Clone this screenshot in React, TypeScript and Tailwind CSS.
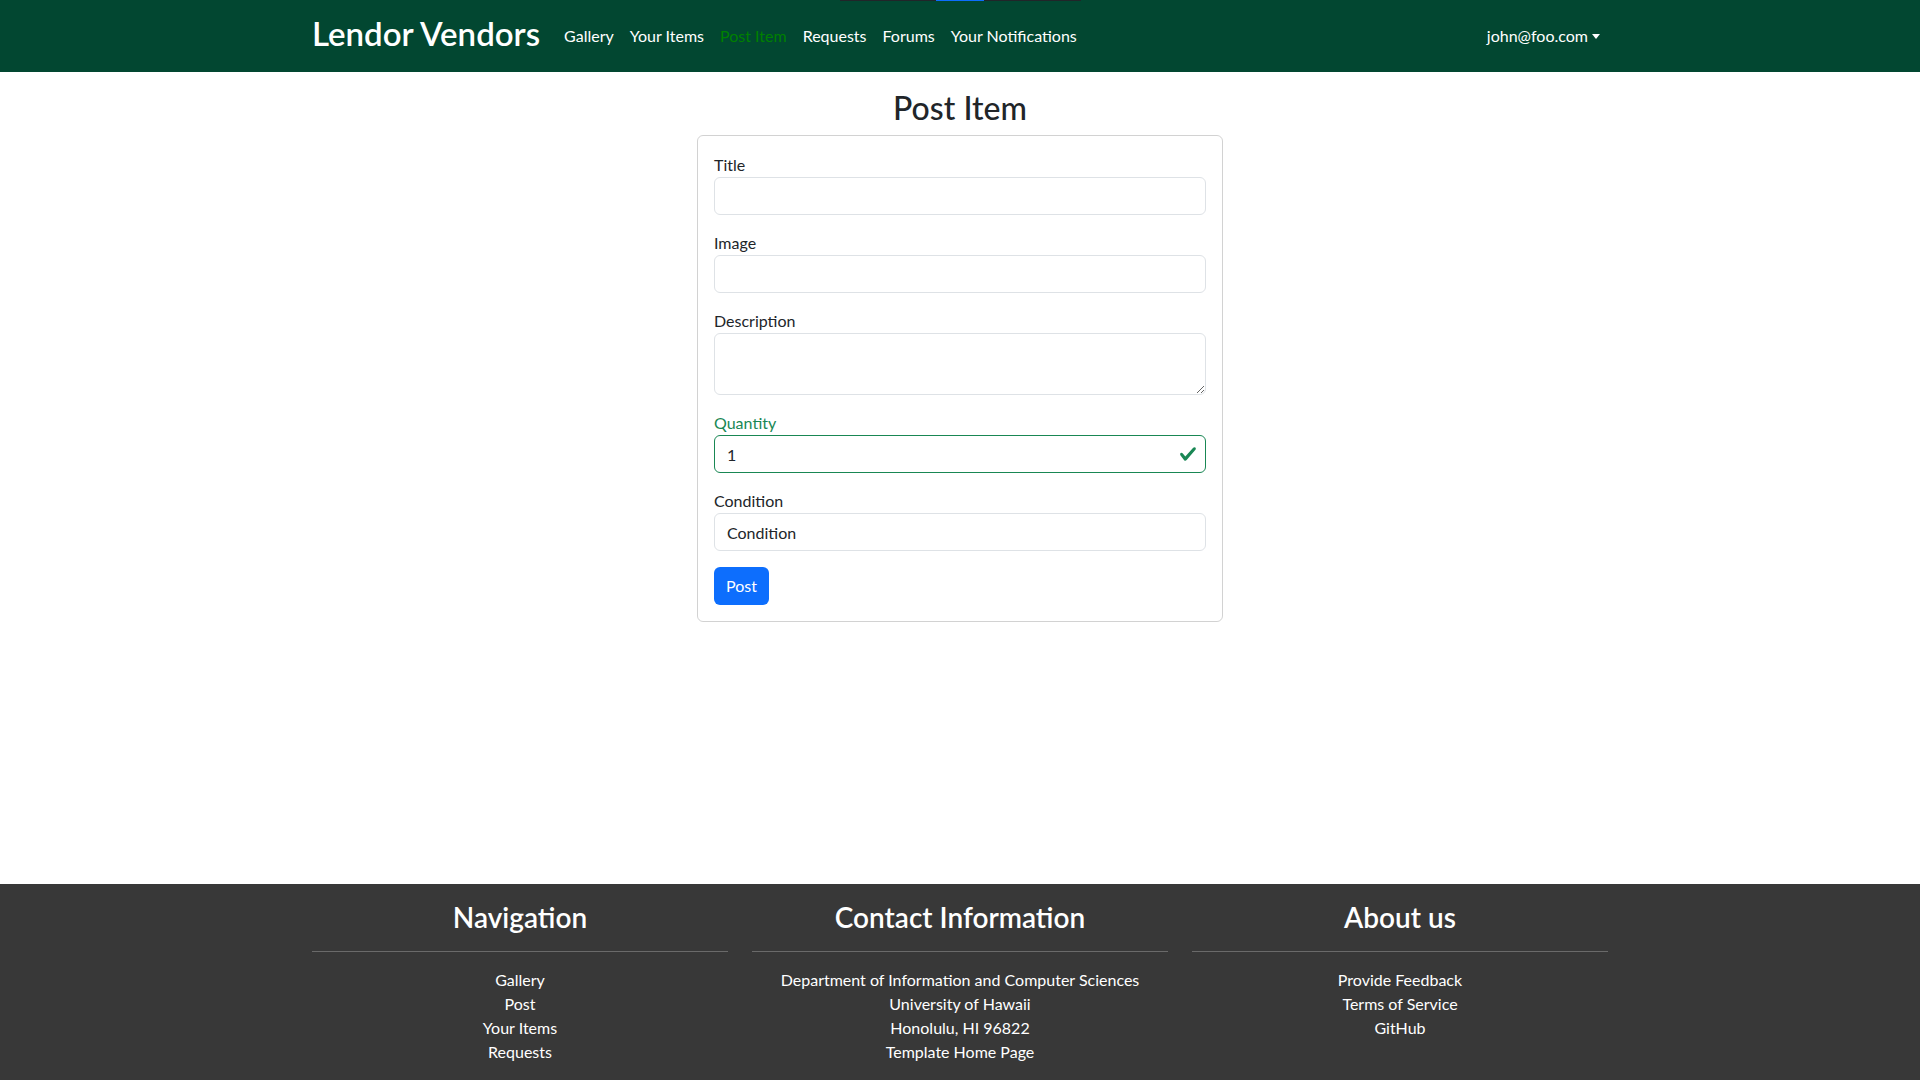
import React from "react";

const navLinks = ["Gallery", "Your Items", "Post Item", "Requests", "Forums", "Your Notifications"];

const footerCols = [
  { title: "Navigation", lines: ["Gallery", "Post", "Your Items", "Requests"] },
  {
    title: "Contact Information",
    lines: [
      "Department of Information and Computer Sciences",
      "University of Hawaii",
      "Honolulu, HI 96822",
      "Template Home Page",
    ],
  },
  { title: "About us", lines: ["Provide Feedback", "Terms of Service", "GitHub"] },
];

const inputCls =
  "block w-full h-[38px] px-3 py-1.5 text-base leading-6 text-[#212529] bg-white border border-[#dee2e6] rounded-[6px] outline-none";

function CheckIcon() {
  return (
    <svg viewBox="0 0 8 8" className="w-[18px] h-[18px]">
      <path
        fill="#198754"
        d="M2.3 6.73.6 4.53c-.4-1.04.46-1.4 1.1-.8l1.1 1.4 3.4-3.8c.6-.63 1.6-.27 1.2.7l-4 4.6c-.43.5-.8.4-1.1.1z"
      />
    </svg>
  );
}

export default function App() {
  return (
    <div className="relative min-h-screen bg-white font-['Lato',sans-serif] text-base leading-6 text-[#212529]">
      {/* thin strip over the navbar */}
      <div className="absolute top-0 left-[840px] w-[241px] h-px flex">
        <div className="w-[96px] bg-[#212529]" />
        <div className="w-[48px] bg-[#0d6efd]" />
        <div className="flex-1 bg-[#212529]" />
      </div>

      {/* ── Navbar ── */}
      <nav className="h-[72px] bg-[#024731]">
        <div className="mx-auto w-[1320px] h-full px-3 flex items-center">
          <span className="text-[33px] leading-[48px] font-semibold text-white mr-4 mb-[6px]">
            Lendor Vendors
          </span>
          <ul className="flex">
            {navLinks.map((l) => (
              <li key={l}>
                <a className={l === "Post Item" ? "px-2 text-[#008000]" : "px-2 text-white"}>{l}</a>
              </li>
            ))}
          </ul>
          <div className="ml-auto px-2 flex items-center text-white">
            john@foo.com
            <span className="ml-[4px] mt-[1px] w-0 h-0 border-t-[5px] border-x-[4px] border-x-transparent border-t-white" />
          </div>
        </div>
      </nav>

      {/* ── Main ── */}
      <main className="h-[812px] pt-[17px]">
        <div className="mx-auto w-[1320px] px-3">
          <h2 className="text-center text-[32px] leading-[1.2] font-medium mb-2">Post Item</h2>
          <div className="mx-auto w-[526px] border border-black/[.175] rounded-[6px] px-4 pt-[17px] pb-4">
            <div className="mb-4">
              <label className="block">Title</label>
              <input className={inputCls} />
            </div>
            <div className="mb-4">
              <label className="block">Image</label>
              <input className={inputCls} />
            </div>
            <div className="mb-4">
              <label className="block">Description</label>
              <textarea
                rows={2}
                className="block w-full h-[62px] px-3 py-1.5 text-base leading-6 bg-white border border-[#dee2e6] rounded-[6px] outline-none resize-y"
              />
            </div>
            <div className="mb-4">
              <label className="block text-[#198754]">Quantity</label>
              <div className="relative">
                <input
                  defaultValue="1"
                  className="block w-full h-[38px] pl-3 pr-10 py-1.5 text-base leading-6 text-[#212529] bg-white border border-[#198754] rounded-[6px] outline-none"
                />
                <span className="absolute right-[9px] top-[10px]">
                  <CheckIcon />
                </span>
              </div>
            </div>
            <div className="mb-4">
              <label className="block">Condition</label>
              <input defaultValue="Condition" className={inputCls} />
            </div>
            <button className="h-[38px] px-3 rounded-[6px] bg-[#0d6efd] text-white">Post</button>
          </div>
        </div>
      </main>

      {/* ── Footer ── */}
      <footer className="bg-[#383838] text-white pt-[17px] pb-4">
        <div className="mx-auto w-[1320px] grid grid-cols-3">
          {footerCols.map((c) => (
            <div key={c.title} className="px-3 text-center">
              <h3 className="text-[28px] leading-[1.2] font-semibold mb-[7px]">{c.title}</h3>
              <hr className="my-4 border-0 border-t border-white/25" />
              {c.lines.map((line) => (
                <div key={line}>{line}</div>
              ))}
            </div>
          ))}
        </div>
      </footer>
    </div>
  );
}
